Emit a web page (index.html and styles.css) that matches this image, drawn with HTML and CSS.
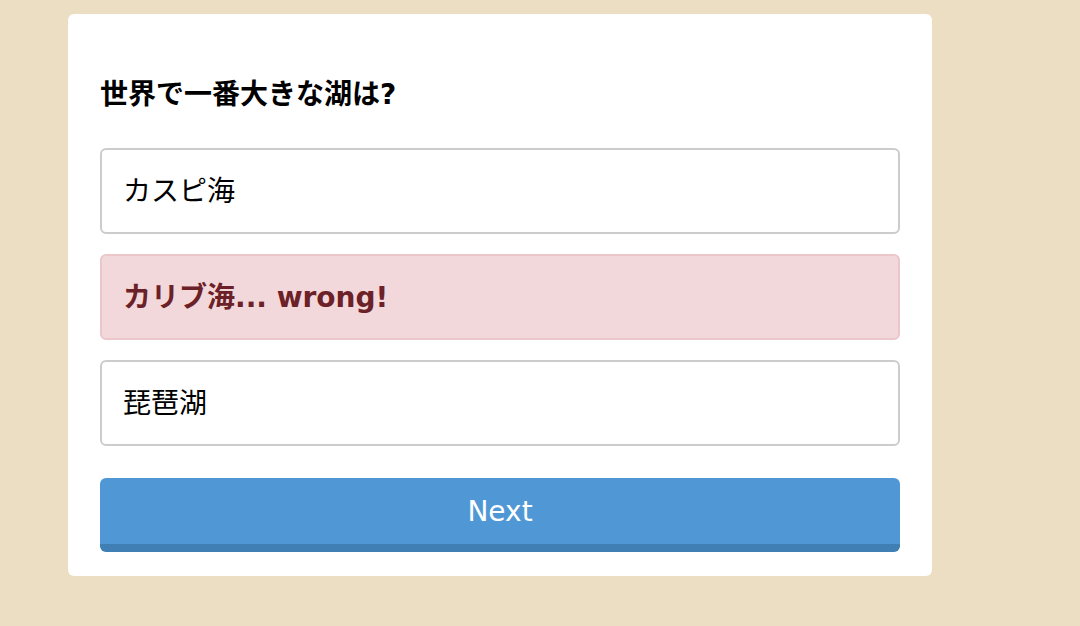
FILE: index.html
```html
<!DOCTYPE html>
<html lang="ja">
<head>
<meta charset="utf-8">
<link rel="stylesheet" href="styles.css">
</head>
<body>
<div class="card">
  <h2 class="question">世界で一番大きな湖は?</h2>
  <div class="options">
    <div class="option">カスピ海</div>
    <div class="option wrong">カリブ海... wrong!</div>
    <div class="option">琵琶湖</div>
  </div>
  <button class="next">Next</button>
</div>
</body>
</html>
```
FILE: styles.css
```css
html, body {
  margin: 0;
  padding: 0;
  background: #ebdec3;
}
body {
  padding: 14px 0 0 68px;
  font-family: "DejaVu Sans", "Noto Sans CJK JP", sans-serif;
}
.card {
  width: 864px;
  box-sizing: border-box;
  background: #ffffff;
  border-radius: 6px;
  padding: 32px 32px 24px 32px;
}
.question {
  margin: 29px 0 33px 0;
  font-size: 28px;
  line-height: 40px;
  font-weight: bold;
  color: #000;
}
.options {
  display: flex;
  flex-direction: column;
  gap: 20px;
}
.option {
  height: 86px;
  box-sizing: border-box;
  border: 2px solid #cccccc;
  border-radius: 6px;
  padding: 0 21px 4px 21px;
  display: flex;
  align-items: center;
  font-size: 28px;
  color: #000;
}
.option.wrong {
  background: #f2d8da;
  border-color: #ebc6ca;
  color: #6b2127;
  font-weight: bold;
}
.next {
  display: block;
  width: 100%;
  height: 74px;
  margin-top: 32px;
  border: none;
  border-bottom: 8px solid #3f7fb3;
  border-radius: 6px;
  background: #5098d5;
  color: #ffffff;
  font-family: "DejaVu Sans", sans-serif;
  font-size: 28px;
  padding: 0;
}
```
